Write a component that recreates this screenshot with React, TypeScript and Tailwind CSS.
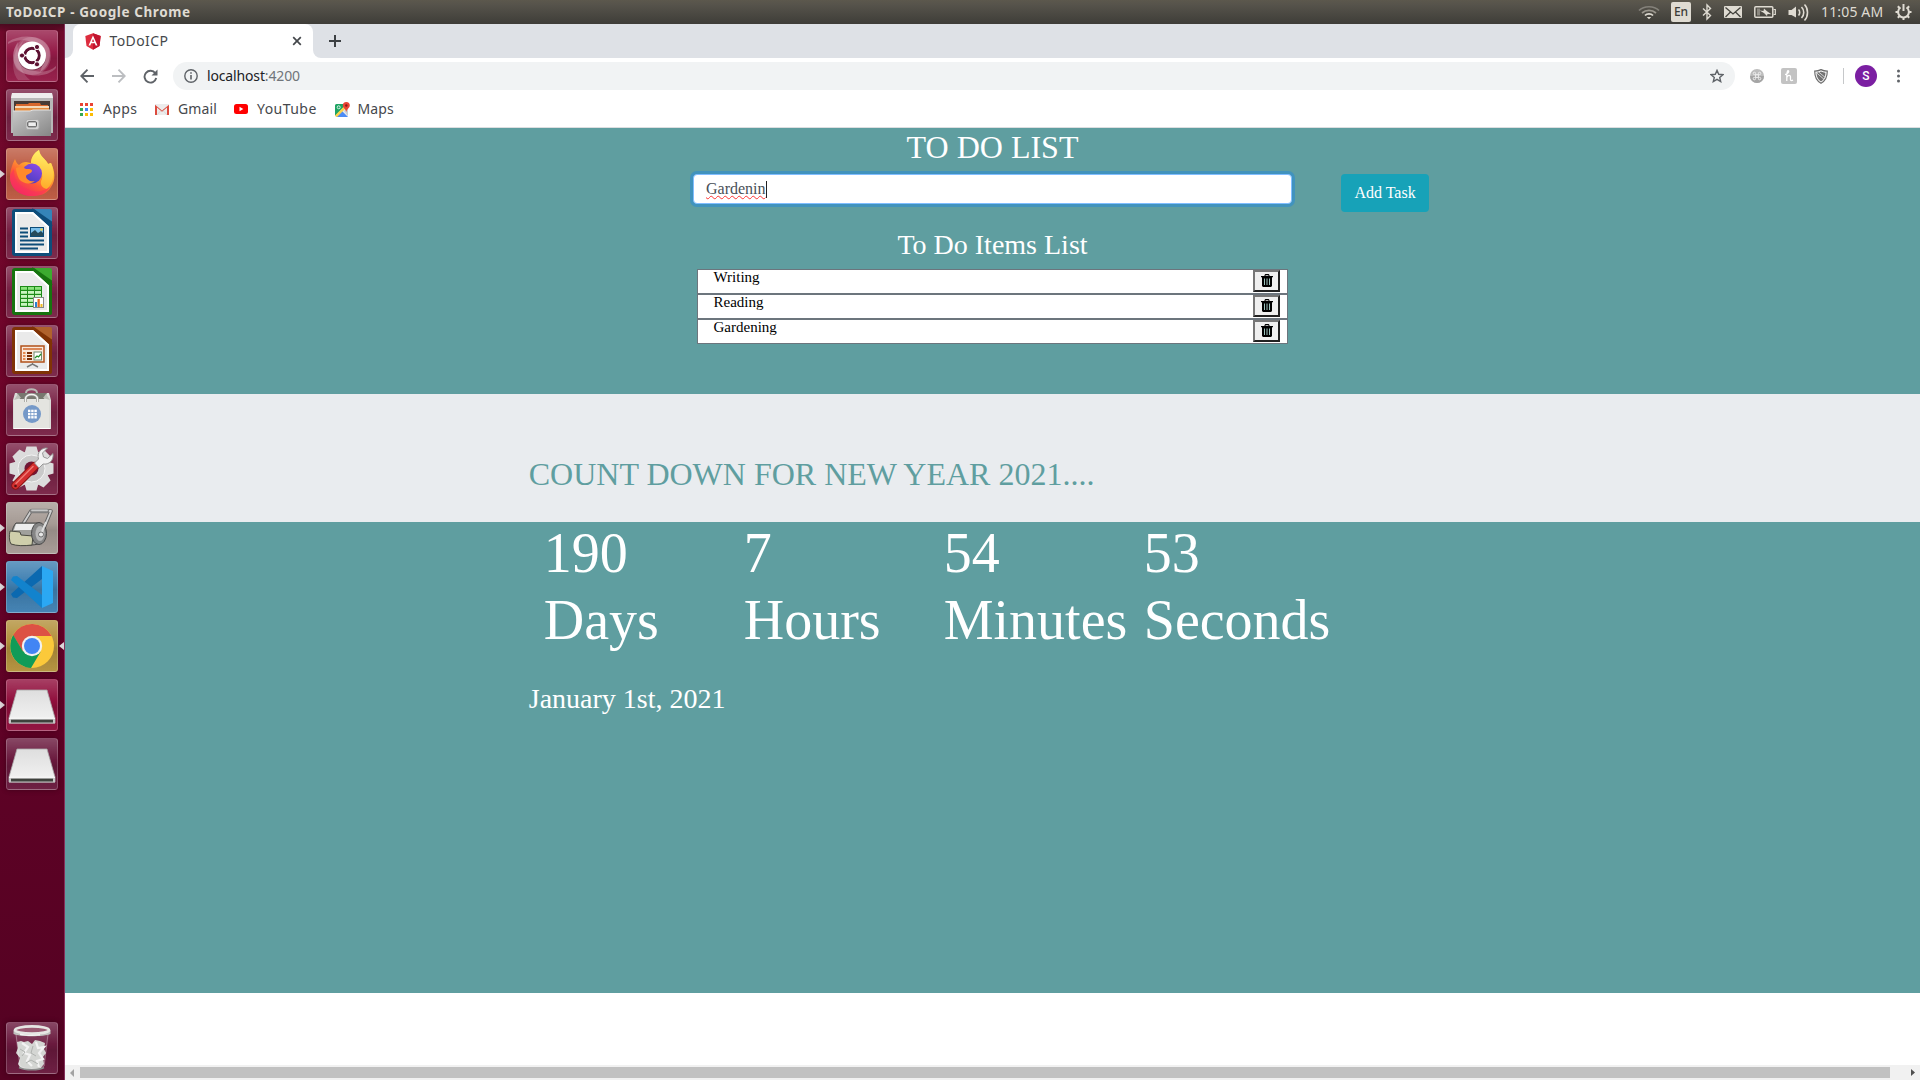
import React from "react";

const SERIF = "font-['Liberation_Serif',serif]";

/* ---------- launcher artwork, drawn on a 52x52 tile ---------- */

const UbuntuIcon = () => (
  <>
    <defs>
      <radialGradient id="ub" cx=".5" cy=".5" r=".7">
        <stop offset="0" stopColor="#fff" stopOpacity=".4" />
        <stop offset="1" stopColor="#fff" stopOpacity=".05" />
      </radialGradient>
    </defs>
    <circle cx="26" cy="26" r="19" fill="url(#ub)" />
    <path d="M2 12C14 4 36 4 43 18 46 28 42 38 34 42 40 30 38 16 26 12 18 9 8 10 2 14z" fill="#fff" opacity=".22" />
    <path d="M50 38C42 48 18 48 10 38 6 30 6 20 12 12 10 24 14 36 26 40 34 43 44 42 50 36z" fill="#fff" opacity=".22" />
    <path d="M12 50C4 40 6 20 18 10 10 22 12 40 24 50z" fill="#fff" opacity=".15" />
    <circle cx="26" cy="26.5" r="14" fill="#3a0016" opacity=".4" />
    <circle cx="26" cy="25.5" r="14" fill="#fff" />
    <circle cx="26" cy="25.5" r="7.2" fill="none" stroke="#5c1031" strokeWidth="3" />
    <path d="M26 25.5H15M26 25.5L31.5 16M26 25.5L31.5 35" stroke="#fff" strokeWidth="1.4" />
    <circle cx="26" cy="25.5" r="5.5" fill="#fff" />
    <g fill="#5c1031" stroke="#fff" strokeWidth="1">
      <circle cx="16" cy="25.5" r="2.6" />
      <circle cx="31" cy="17" r="2.6" />
      <circle cx="31" cy="34.3" r="2.6" />
    </g>
  </>
);

const FilesIcon = () => (
  <>
    <defs>
      <linearGradient id="fl" x1="0" y1="0" x2="1" y2="1">
        <stop offset="0" stopColor="#c9c9c9" />
        <stop offset="1" stopColor="#868686" />
      </linearGradient>
    </defs>
    <path d="M6 4h40l1 5v35H5V9z" fill="#b8b8b8" />
    <path d="M6 4h40l1 5H5z" fill="#eee" />
    <path d="M8 12h36v11H8z" fill="#463a35" />
    <path d="M10 15h12l1-1h11l1 2h7v7H9z" fill="#d8672c" />
    <path d="M9 17h34v2H9z" fill="#f5d9b8" />
    <path d="M9 19h34v4H9z" fill="#e58b3c" />
    <path d="M7 22h17l3-1h18v26H7z" fill="url(#fl)" />
    <path d="M7 22h17l3-1h18" fill="none" stroke="#e2e2e2" strokeWidth="1" />
    <rect x="20" y="30.5" width="13" height="10" rx="2" fill="#d4d4d4" stroke="#aaa" />
    <rect x="21.8" y="32.8" width="8.6" height="5" rx="1" fill="#eee" stroke="#444" strokeWidth="1" />
  </>
);

const FirefoxIcon = () => (
  <>
    <defs>
      <linearGradient id="ff" x1=".8" y1="0" x2=".2" y2="1">
        <stop offset="0" stopColor="#fff44f" />
        <stop offset=".35" stopColor="#ffb52d" />
        <stop offset=".65" stopColor="#ff5a36" />
        <stop offset="1" stopColor="#ec1b72" />
      </linearGradient>
      <linearGradient id="ffb" x1=".8" y1="0" x2=".3" y2="1">
        <stop offset="0" stopColor="#8a4be8" />
        <stop offset="1" stopColor="#4a3dc0" />
      </linearGradient>
      <linearGradient id="ffy" x1=".6" y1="0" x2=".5" y2="1">
        <stop offset="0" stopColor="#fff36a" />
        <stop offset="1" stopColor="#ffaa28" />
      </linearGradient>
    </defs>
    <path d="M9 11c1 3 2 5 4 6 2-2 4-3 7-3l5 1c0-5 3-10 8-13 1 7 7 9 9 14l3-1c4 8 5 17 0 24-4 7-11 9-19 9C13 48 4 40 4 29 4 22 7 15 9 11z" fill="url(#ff)" />
    <path d="M25 15c0-5 3-10 8-13 1 7 7 9 9 14l3-1c4 10 3 20-4 26-5-1-8-5-5-10 2-7-4-13-11-16z" fill="url(#ffy)" />
    <circle cx="26" cy="25.500" r="10" fill="url(#ffb)" />
    <path d="M10 20c4-2 7-1 10 1 3 0 6 0 6 2-1 3-5 3-6 5 0 4 5 6 9 5-4 4-12 3-16-2-2-4-3-8-3-11z" fill="#ff8a2c" />
    <path d="M4 27c-1 12 10 21 22 21 9 0 15-4 18-9-8 5-16 6-23 2C13 38 8 32 8 21z" fill="#f9325c" opacity=".55" />
  </>
);

function DocBase({ dark, light }: { dark: string; light: string }) {
  return (
    <>
      <path d="M9 2h25L46 14v33a2 2 0 0 1-2 2H9a3 3 0 0 1-3-3V5a3 3 0 0 1 3-3z" fill={dark} />
      <path d="M28 2h16a2 2 0 0 1 2 2v10.500z" fill={light} />
      <path d="M26 2L46 19" stroke={dark} strokeWidth="2" />
      <path d="M9 5h18L43 19.500V46H9z" fill="#eaeaea" />
      <path d="M10 6h16.600L42 20v25H10z" fill="none" stroke="#fff" strokeWidth="2" />
    </>
  );
}

const WriterIcon = () => (
  <>
    <DocBase dark="#0e4d7a" light="#3584b8" />
    <path d="M14 21.500h8M14 25.500h8M14 29.500h8M14 33.500h24M14 37.500h24M14 41.500h18" stroke="#0d4c78" strokeWidth="2" />
    <rect x="24.500" y="20.500" width="13" height="9" fill="#7cc0ea" stroke="#0d4c78" />
    <path d="M25 29v-3l4-3 3 3 3-2 2 2v3z" fill="#274a5a" />
    <circle cx="35.500" cy="22.500" r="1.200" fill="#f5d040" />
  </>
);

const CalcIcon = () => (
  <>
    <DocBase dark="#17740f" light="#3cab2f" />
    <rect x="14" y="20" width="22" height="21" fill="#1d8b17" />
    {[21, 25, 29, 33, 37].map((y) =>
      [15, 22, 29].map((x) => <rect key={`${x}-${y}`} x={x} y={y} width="6" height="2.800" fill={y === 21 ? "#8be37c" : "#c9f5bf"} />)
    )}
    <rect x="27.500" y="31.500" width="10" height="10" fill="#fff" stroke="#888" />
    <path d="M29 36h2v5h-2z" fill="#2a80d2" />
    <path d="M31.500 33h2.300v8h-2.300z" fill="#e8671c" />
    <path d="M34.500 38h2v3h-2z" fill="#f0b920" />
  </>
);

const ImpressIcon = () => (
  <>
    <DocBase dark="#803306" light="#b0622c" />
    <rect x="15" y="21" width="23" height="16" fill="#fae9dc" stroke="#b1501a" strokeWidth="1.500" />
    <path d="M17 24h19" stroke="#d0662c" strokeWidth="1.600" />
    <path d="M17 28h2.500M17 31h2.500M17 34h2.500" stroke="#e58a50" strokeWidth="2" />
    <path d="M21 28h5M21 31h5M21 34h5" stroke="#7a2f06" strokeWidth="2" />
    <rect x="28" y="27" width="7.500" height="8" fill="#fff" stroke="#6f8a70" />
    <path d="M29 33l2-2 1.500 1 2.500-3" fill="none" stroke="#25922a" strokeWidth="1.300" />
    <path d="M26.500 38v2M21 42l5.500-3 5.500 3" fill="none" stroke="#777" strokeWidth="1.500" />
  </>
);

const SoftwareIcon = () => (
  <>
    <path d="M20 12V9c0-5 11-5 11 0v3" fill="none" stroke="#b9b9b5" strokeWidth="2" />
    <path d="M9 9h34l2 7v29H7V16z" fill="#dadbd7" />
    <path d="M11 9h30l-3 6H14z" fill="#77776f" />
    <path d="M8 15h35v29H8z" fill="#e4e4e0" />
    <path d="M8 44.500h36" stroke="#fff" />
    <path d="M12 10l-4 6 7-2zM40 10l4 6-7-2z" fill="#bdbdb7" />
    <path d="M19.500 18v-3c0-6 12-6 12 0v3" fill="none" stroke="#92928c" strokeWidth="3" />
    <path d="M19.500 18v-3c0-6 12-6 12 0v3" fill="none" stroke="#f4f4f2" strokeWidth="1.600" />
    <circle cx="26" cy="30" r="9" fill="#7599c8" />
    {[26, 29.200, 32.400].map((y) => [22, 25.200, 28.400].map((x) => <rect key={`${x}-${y}`} x={x} y={y - 0.300} width="2.400" height="2.400" fill="#fff" />))}
  </>
);

const SettingsIcon = () => (
  <>
    <g fill="#dcdcdc">
      {[0, 45, 90, 135, 180, 225, 270, 315].map((a) => (
        <path key={a} d="M20.500 3.500h10l2 7h-14z" transform={`rotate(${a} 25.500 25.500)`} />
      ))}
      <circle cx="25.500" cy="25.500" r="17.500" />
    </g>
    <circle cx="25.500" cy="25.500" r="13.500" fill="#c9c9c9" stroke="#f3f3f3" />
    <circle cx="25.500" cy="25.500" r="7" fill="#6f1737" />
    <path d="M9.500 42.500L29 23" stroke="#8c1414" strokeWidth="8.500" strokeLinecap="round" />
    <path d="M9.500 42.500L29 23" stroke="#d32f2f" strokeWidth="6.500" strokeLinecap="round" />
    <path d="M10 40.500L27 23.500" stroke="#f07a72" strokeWidth="1.500" strokeLinecap="round" />
    <path d="M28.500 20l4-4c-2-6 3-12 9-11l-5 5 1 4 4 1.500 5.500-5c1 7-4 11.500-10 10.500L33 25z" fill="#f1f1f1" stroke="#8e8e8e" strokeWidth=".9" />
    <circle cx="9.500" cy="43" r="1.300" fill="#591010" />
  </>
);

const RollerIcon = () => (
  <>
    <path d="M17 22L25 9h20L36 31" fill="none" stroke="#626262" strokeWidth="3.600" strokeLinejoin="round" />
    <path d="M17 22L25 9h20L36 31" fill="none" stroke="#cfcfcf" strokeWidth="1.800" strokeLinejoin="round" />
    <path d="M26 9h15" stroke="#808080" strokeWidth="4.500" strokeLinecap="round" />
    <path d="M26 8.300h15" stroke="#c9c9c9" strokeWidth="1.800" strokeLinecap="round" />
    <path d="M10 21h24l2 20c-9 3-21 3-29 1-3-6-1-17 3-21z" fill="#a0a09c" stroke="#484848" />
    <path d="M10 22h22v6H8z" fill="#ededed" />
    <path d="M4 29l10 1 1 3 12 1-1 9c-8 1-15 1-21-1-2-3-2-9-1-13z" fill="#cfceab" stroke="#4a4a42" />
    <ellipse cx="33" cy="31.500" rx="7.500" ry="11" fill="#858585" stroke="#484848" />
    <ellipse cx="34" cy="31.500" rx="4.500" ry="7.500" fill="#b7b7b7" />
    <path d="M35 32l5-12" stroke="#ddd" strokeWidth="2" />
    <circle cx="35" cy="32.500" r="2.500" fill="#e8e8e8" stroke="#555" strokeWidth=".8" />
  </>
);

const CodeIcon = () => (
  <>
    <path d="M36 5L5 33l2 3.500 4 .5L36 18z" fill="#0b69b0" />
    <path d="M36 47L5 19l2-3.500 4-.5L36 34z" fill="#1283cd" />
    <path d="M36 5l11 5v32l-11 5z" fill="#2ba8f3" />
  </>
);

const ChromeIcon = () => (
  <>
    <circle cx="26" cy="26" r="22" fill="#fbc93a" />
    <path d="M7 14.900A22 22 0 0 1 45.600 16H26L16.700 31.300z" fill="#dd5144" />
    <path d="M7.200 15A22 22 0 0 0 25 48L34.500 32 26 26 17 31.500z" fill="#109b58" />
    <circle cx="26" cy="26" r="10.200" fill="#f1f1f1" />
    <circle cx="26" cy="26" r="8" fill="#4285f4" />
  </>
);

const DriveIcon = () => (
  <>
    <defs>
      <linearGradient id="dr" x1="0" y1="0" x2="0" y2="1">
        <stop offset="0" stopColor="#dedede" />
        <stop offset="1" stopColor="#f3f3f3" />
      </linearGradient>
    </defs>
    <path d="M11 11h30l8 28v5H3v-5z" fill="url(#dr)" stroke="#a8a8a8" strokeWidth=".8" />
    <path d="M3 39h46v5.500H3z" fill="#c6c6c6" />
    <path d="M3 39.300h46" stroke="#fff" />
    <rect x="5" y="40.700" width="42" height="2.800" fill="#3e413c" />
  </>
);

const TrashTileIcon = () => (
  <>
    <path d="M9 11l4 33c4 4 22 4 26 0l4-33z" fill="#fff" opacity=".08" />
    <path d="M11 20l4-1 3 1 4-1 4 3 3-4 5 1 5 2-1 6 2 4-3 4 1 7-4 5H15l-3-5 2-6-4-5 2-5z" fill="#d4d6d3" />
    <path d="M16 21l6 4-4 6 6 2-3 6 5 5M30 20l2 6 6-1-5 6 4 6-6 2 2 6" fill="none" stroke="#f2f2f2" strokeWidth="2.200" />
    <path d="M14 27l5 3-3 4M27 24l-2 7 5 3M20 41l5-3 7 4" fill="none" stroke="#b0b3b0" strokeWidth="1" />
    <path d="M10 12l4 32c5 4 19 4 24 0l4-32" fill="none" stroke="#fff" strokeOpacity=".3" />
    <path d="M13 45.500c6 3 20 3 25 0" fill="none" stroke="#8b8b8b" strokeWidth="1.500" />
    <path d="M7.500 8c5 4 32 4 37 0v4c-6 3-31 3-37 0z" fill="#bfc0bd" />
    <ellipse cx="26" cy="8" rx="17" ry="3.600" fill="#9a5a72" stroke="#e6e6e3" strokeWidth="2.600" />
    <path d="M14 11.500c6 1.500 14 1.600 20 .6v1.500c-6 .6-14 .6-20-.6z" fill="#f4f4f2" />
  </>
);

type Tile = { bg: string; art: React.ReactNode; running?: boolean; focused?: boolean; name: string };

const PLAIN = "bg-[#7a2447]";
const TILES: Tile[] = [
  { name: "Dash", bg: "bg-[#951c48]", art: <UbuntuIcon /> },
  { name: "Files", bg: PLAIN, art: <FilesIcon /> },
  { name: "Firefox", bg: "bg-[#bd5a41]", art: <FirefoxIcon />, running: true },
  { name: "Writer", bg: PLAIN, art: <WriterIcon /> },
  { name: "Calc", bg: PLAIN, art: <CalcIcon /> },
  { name: "Impress", bg: PLAIN, art: <ImpressIcon /> },
  { name: "Software", bg: PLAIN, art: <SoftwareIcon /> },
  { name: "Settings", bg: PLAIN, art: <SettingsIcon /> },
  { name: "Disk tool", bg: "bg-[#a69b95]", art: <RollerIcon />, running: true },
  { name: "Code", bg: "bg-[#4080b2]", art: <CodeIcon />, running: true },
  { name: "Chrome", bg: "bg-[#b3913c]", art: <ChromeIcon />, running: true, focused: true },
  { name: "Drive", bg: "bg-[#910f3d]", art: <DriveIcon />, running: true },
  { name: "Drive 2", bg: "bg-[#6a1a3e]", art: <DriveIcon /> },
];

function LauncherTile({ tile }: { tile: Tile }) {
  return (
    <div className="flex h-[52px] w-[64px] shrink-0 items-center">
      <svg className="h-[10px] w-[6px]" viewBox="0 0 6 10">{tile.running && <path d="M0 1l5 4-5 4z" fill="#dcd5d8" />}</svg>
      <div className={`h-[52px] w-[52px] overflow-hidden rounded-[3px] ${tile.bg} shadow-[0_0_5px_rgba(30,0,12,0.45)]`}>
        <div className="h-full w-full rounded-[3px] border border-white/20 bg-[linear-gradient(to_bottom,rgba(255,255,255,0.2),rgba(255,255,255,0)_42%,rgba(0,0,0,0.1)_55%,rgba(255,255,255,0.03))]">
          <svg className="-m-px h-[52px] w-[52px] max-w-none" viewBox="0 0 52 52" aria-label={tile.name}>{tile.art}</svg>
        </div>
      </div>
      <svg className="ml-px h-[10px] w-[5px]" viewBox="0 0 5 10">{tile.focused && <path d="M5 1L0 5l5 4z" fill="#dcd5d8" />}</svg>
    </div>
  );
}

function Launcher() {
  return (
    <aside className="flex w-[65px] shrink-0 flex-col border-r border-[#84305a] bg-[linear-gradient(to_bottom,#4a0a20_0,#710a2c_8px,#6f052a_30%,#5f0226_65%,#540222)] pt-[6px] pb-[6px]">
      <div className="flex flex-col gap-[7px]">
        {TILES.map((t) => (
          <LauncherTile key={t.name} tile={t} />
        ))}
      </div>
      <div className="mt-auto">
        <LauncherTile tile={{ name: "Trash", bg: "bg-[#6a1a3e]", art: <TrashTileIcon /> }} />
      </div>
    </aside>
  );
}

/* ---------- desktop panel ---------- */

function Panel() {
  return (
    <header className="flex h-6 shrink-0 items-center bg-[linear-gradient(to_bottom,#5c584d,#56534b_20%,#3e3d38)] pr-[8px] pl-[6px] font-['Noto_Sans',sans-serif] text-[#dfdbd2]">
      <span className="text-[13.5px] leading-6 font-bold tracking-[0.6px] whitespace-nowrap">ToDoICP - Google Chrome</span>
      <svg className="ml-auto h-6 w-[22px]" viewBox="0 0 22 24" fill="none" strokeWidth="1.700">
        <path d="M1 10.500C6 5.500 16 5.500 21 10.500" stroke="#84817a" />
        <path d="M4 13c4-3.600 10-3.600 14 0" stroke="#9b978e" />
        <path d="M7 15.500c2-2.300 6-2.300 8 0" stroke="#dfdbd2" />
        <path d="M8.800 17h4.400L11 19.200z" fill="#dfdbd2" />
      </svg>
      <span className="ml-[11px] flex h-5 w-5 items-center justify-center rounded-[2px] bg-[#dfdbd2] text-[12px] leading-none font-medium text-[#3c3b37]">En</span>
      <svg className="ml-[11px] h-6 w-[10px]" viewBox="0 0 10 24" fill="none" stroke="#dfdbd2" strokeWidth="1.400">
        <path d="M1 8.500l7.500 7L5 19V5l3.500 3.500L1 15.500" />
      </svg>
      <svg className="ml-[12px] h-6 w-[18px]" viewBox="0 0 18 24">
        <rect y="6" width="18" height="12" rx="1" fill="#dfdbd2" />
        <path d="M1.500 7.500L9 14l7.500-6.500M1.500 17L6.500 12M16.500 17L11.500 12" fill="none" stroke="#44433d" strokeWidth="1.300" />
      </svg>
      <svg className="ml-[12px] h-6 w-[22px]" viewBox="0 0 22 24">
        <rect x=".8" y="6.800" width="18" height="10.500" rx="1" fill="none" stroke="#dfdbd2" strokeWidth="1.500" />
        <path d="M3 8.500h3v7H3z" fill="#8b8880" />
        <path d="M19.500 9.500h1.800v5h-1.800" fill="none" stroke="#dfdbd2" strokeWidth="1.200" />
        <path d="M5.500 10.500l4 .5.500-2.500 3 2.800 4.500 3-4-.3-.5 2-3-3z" fill="#dfdbd2" />
      </svg>
      <svg className="ml-[12px] h-6 w-[21px]" viewBox="0 0 21 24" fill="none" stroke="#dfdbd2" strokeWidth="1.600">
        <path d="M.5 10h3L8 6.500v11L3.500 15h-3z" fill="#dfdbd2" stroke="none" />
        <path d="M10.500 9.500c1.600 1.600 1.600 4.400 0 6M13.500 7c3 3 3 8 0 11M16.500 4.500c4 4 4 12 0 16" />
      </svg>
      <span className="ml-[12px] w-[62px] text-[14px] leading-6 tracking-[0.15px] whitespace-nowrap">11:05 AM</span>
      <svg className="ml-[12px] h-6 w-[17px]" viewBox="0 0 17 24" fill="none" stroke="#dfdbd2">
        <path d="M5.500 7.500a5.400 5.400 0 1 0 6 0" strokeWidth="2" />
        <path d="M8.500 4v7" strokeWidth="2" />
        <path d="M8.500 17v3M.5 12h3M13.500 12h3M2.800 6.300l2 2M14.200 6.300l-2 2M2.800 17.700l2-2M14.200 17.700l-2-2" strokeWidth="2" />
      </svg>
    </header>
  );
}

/* ---------- browser chrome ---------- */

function TabStrip() {
  return (
    <div className="flex h-[34px] bg-[#dee1e6]">
      <div className="w-2 bg-white"><div className="h-full rounded-br-[8px] bg-[#dee1e6]" /></div>
      <div className="flex w-[240px] items-center rounded-t-[8px] bg-white pr-[11px] pl-[12px]">
        <svg className="h-[17px] w-4" viewBox="0 0 16 17">
          <path d="M8 .3L15.700 3l-1.200 10L8 16.700 1.500 13 .3 3z" fill="#dd2c3e" />
          <path d="M8 .3L15.700 3l-1.200 10L8 16.700z" fill="#c2152f" />
          <path d="M8 2.600L3.500 12.500h1.800l.9-2.200h3.600l.9 2.200h1.800zm0 3.300l1.200 2.900H6.800z" fill="#fff" />
        </svg>
        <span className="ml-[8.500px] font-['Noto_Sans',sans-serif] text-[14px] leading-none tracking-[0.4px] text-[#45484c]">ToDoICP</span>
        <svg className="ml-auto h-[10px] w-[10px]" viewBox="0 0 10 10"><path d="M1.200 1.200l7.600 7.600M8.800 1.200L1.200 8.800" stroke="#44474b" strokeWidth="1.700" /></svg>
      </div>
      <div className="w-2 bg-white"><div className="h-full rounded-bl-[8px] bg-[#dee1e6]" /></div>
      <svg className="mt-[11px] ml-2 h-3 w-3" viewBox="0 0 12 12"><path d="M6 0v12M0 6h12" stroke="#3c4043" strokeWidth="2" /></svg>
    </div>
  );
}

function Toolbar() {
  return (
    <div className="flex h-9 items-center bg-white pl-[15px]">
      <svg className="h-[14px] w-[14px]" viewBox="0 0 14 14" fill="none" stroke="#5f6368" strokeWidth="1.900"><path d="M14 7H1.500M7.500.7L1.300 7l6.200 6.300" /></svg>
      <svg className="ml-[18px] h-[14px] w-[14px]" viewBox="0 0 14 14" fill="none" stroke="#bcbec1" strokeWidth="1.900"><path d="M0 7h12.500M6.500.7L12.700 7l-6.200 6.300" /></svg>
      <svg className="ml-[17px] h-[15px] w-[15px]" viewBox="0 0 15 15"><path d="M12.300 4.300A5.900 5.900 0 1 0 13.200 9" fill="none" stroke="#5f6368" strokeWidth="1.900" /><path d="M14.500.5v6h-6z" fill="#5f6368" /></svg>
      <div className="ml-[15px] flex h-7 w-[1562px] items-center rounded-full bg-[#f1f3f4] pr-[11px] pl-[11px]">
        <svg className="h-[14px] w-[14px]" viewBox="0 0 14 14"><circle cx="7" cy="7" r="6.200" fill="none" stroke="#5f6368" strokeWidth="1.400" /><path d="M7 6v4.500M7 3.300v1.500" stroke="#5f6368" strokeWidth="1.600" /></svg>
        <span className="ml-[9px] font-['Noto_Sans',sans-serif] text-[14px] leading-none tracking-[-0.150px] text-[#202124]">localhost<span className="text-[#70757a]">:4200</span></span>
        <svg className="ml-auto h-[14px] w-[14px]" viewBox="0 0 14 14"><path d="M7 1.400l1.700 3.900 4.200.4-3.200 2.800 1 4.100L7 10.400l-3.700 2.200 1-4.100L1.100 5.700l4.200-.4z" fill="none" stroke="#5f6368" strokeWidth="1.400" /></svg>
      </div>
      <svg className="ml-[15px] h-[14px] w-[14px]" viewBox="0 0 14 14">
        <circle cx="7" cy="7" r="7" fill="#bdbdbd" /><path d="M0 7h14a7 7 0 0 1-14 0z" fill="#a5a5a5" />
        <path d="M5.600 5.600h2.800v2.800H5.600zM5.600 5.600H4.500a1.200 1.200 0 1 1 1.100-1.100zM8.400 5.600V4.500a1.200 1.200 0 1 1 1.100 1.100zM8.400 8.400h1.100a1.200 1.200 0 1 1-1.100 1.100zM5.600 8.400v1.100a1.200 1.200 0 1 1-1.100-1.100z" fill="none" stroke="#eee" strokeWidth="1" />
      </svg>
      <svg className="ml-[17px] h-4 w-4" viewBox="0 0 16 16">
        <rect width="16" height="16" rx="2" fill="#c3c3c3" />
        <path d="M4 6.500C6.500 6 8.300 4 7.600 2.800 6.800 1.800 5.800 4 5.800 7v6M5.800 9.500c.8-2.500 3.700-3 3.700-.5 0 2-.8 4.500 2.500 3.200" fill="none" stroke="#fff" strokeWidth="1.300" />
      </svg>
      <svg className="ml-[17px] h-[15px] w-[14px]" viewBox="0 0 14 15">
        <path d="M7 .6c2 1.100 4 1.500 6.300 1.500 0 5.900-1.800 9.900-6.300 12.200C2.500 12 .7 8 .7 2.100 3 2.100 5 1.700 7 .6z" fill="#fff" stroke="#6e6e6e" strokeWidth="1.200" />
        <path d="M7 2.600c1.500.8 3 1.100 4.500 1.200-.2 4.200-1.500 6.900-4.500 8.600C4 10.700 2.700 8 2.500 3.800 4 3.700 5.500 3.400 7 2.600z" fill="#717171" />
        <path d="M2.500 3.800l7.500 6.500M5 3.300l6.300 5.200" stroke="#ddd" strokeWidth=".9" />
      </svg>
      <span className="ml-[15px] h-4 w-px bg-[#c6c8ca]" />
      <span className="ml-[11px] flex h-[22px] w-[22px] items-center justify-center rounded-full bg-[#7b1fa2] font-[Roboto,sans-serif] text-[12px] leading-none font-medium text-white">S</span>
      <svg className="ml-5 h-[14px] w-[3px]" viewBox="0 0 3 14" fill="#5f6368"><circle cx="1.500" cy="2" r="1.500" /><circle cx="1.500" cy="7" r="1.500" /><circle cx="1.500" cy="12" r="1.500" /></svg>
    </div>
  );
}

const GRID_COLORS = ["#ea4335", "#ea4335", "#ea4335", "#34a853", "#4285f4", "#fbbc05", "#34a853", "#fbbc05", "#fbbc05"];

function Bookmarks() {
  return (
    <nav className="flex h-[34px] items-center border-b border-[#dcdee0] bg-white pb-[3px] pl-[15px] font-['Noto_Sans',sans-serif] text-[14px] leading-none text-[#45484c]">
      <svg className="h-[13px] w-[13px]" viewBox="0 0 13 13">
        {GRID_COLORS.map((c, i) => <rect key={i} x={(i % 3) * 5} y={Math.floor(i / 3) * 5} width="3" height="3" fill={c} />)}
      </svg>
      <span className="ml-[10px] w-[35px] tracking-[0.4px] whitespace-nowrap">Apps</span>
      <svg className="ml-[17px] h-[11px] w-[14px]" viewBox="0 0 14 11">
        <path d="M0 0h14v11H0z" fill="#ececec" /><path d="M0 11V.8L7 6.500 14 .8V11h-2V3.600L7 7.800 2 3.600V11z" fill="#dc4a3d" />
        <path d="M2 11l4-4.500M12 11L8 6.500" stroke="#d0d0d0" strokeWidth=".7" />
      </svg>
      <span className="ml-[9px] w-[39px] tracking-[0.1px] whitespace-nowrap">Gmail</span>
      <svg className="ml-[17px] h-[10px] w-[14px]" viewBox="0 0 14 10"><rect width="14" height="10" rx="2.500" fill="#f00" /><path d="M5.500 2.800v4.400L9.300 5z" fill="#fff" /></svg>
      <span className="ml-[9px] w-[61px] tracking-[0.45px] whitespace-nowrap">YouTube</span>
      <svg className="ml-[17px] h-[15px] w-[15px]" viewBox="0 0 15 15">
        <rect y="2" width="13" height="13" rx="1.500" fill="#e8eaed" />
        <path d="M1.500 2H9v3L0 14V3.500A1.500 1.500 0 0 1 1.500 2z" fill="#1fa463" />
        <path d="M1 15l6-6 6 6z" fill="#4c8bf5" /><path d="M0 13.500L9.500 4l1.500 2L2 15H1.500z" fill="#fdd34a" /><path d="M9 9l4-3v8z" fill="#c9ced3" />
        <circle cx="3.700" cy="5.300" r="1.500" fill="none" stroke="#fff" strokeWidth=".8" />
        <path d="M11.300 0a3.500 3.500 0 0 1 3.500 3.500c0 2.500-3 3.500-3.500 6.500-.5-3-3.500-4-3.500-6.500A3.500 3.500 0 0 1 11.300 0z" fill="#e94435" /><circle cx="11.300" cy="3.500" r="1.200" fill="#8c1a12" />
      </svg>
      <span className="ml-[7.500px] tracking-[0.150px] whitespace-nowrap">Maps</span>
    </nav>
  );
}

/* ---------- to-do page ---------- */

function DeleteButton() {
  return (
    <button className="mr-[7px] flex h-[22px] w-[27px] items-center justify-center border-2 border-t-[#767676] border-r-[#212121] border-b-[#212121] border-l-[#767676] bg-[#efefef]" aria-label="Delete">
      <svg className="h-[13px] w-3" viewBox="0 0 12 13">
        <path d="M3.500 2V.9L4.400 0h3.200l.9.900V2H12v1.300h-1V12l-1 1H2l-1-1V3.300H0V2zM4.600 2h2.800V1.200H4.600z" fill="#000" fillRule="evenodd" />
        <path d="M3.500 4.500v6.500M6 4.500v6.500M8.500 4.500v6.500" stroke="#9cc3bd" strokeWidth="1" />
      </svg>
    </button>
  );
}

const TASKS = ["Writing", "Reading", "Gardening"];
const COUNTDOWN = [["190", "Days"], ["7", "Hours"], ["54", "Minutes"], ["53", "Seconds"]];

function TodoPage() {
  return (
    <main className={`flex flex-1 flex-col overflow-hidden bg-white ${SERIF}`}>
      <section className="h-[266px] shrink-0 bg-[#5f9ea0]">
        <h2 className="text-center text-[32px] leading-[38.4px] text-white">TO DO LIST</h2>
        <div className="mt-[7.600px] flex items-start pl-[628px]">
          <div className="flex h-[30px] w-[599px] items-center rounded-[4px] border border-[#80bdff] bg-white pl-3 text-[16px] text-[#495057] shadow-[0_0_0_3px_rgba(0,123,255,0.25),0_0_0_3px_rgba(0,123,255,0.08)]">
            <span className="underline decoration-[#f33] decoration-wavy decoration-[1px] underline-offset-[1px]">Gardenin</span>
            <span className="h-[17px] w-px bg-[#222]" />
          </div>
          <button className="ml-[49px] h-[38px] w-[88px] rounded-[4px] bg-[#17a2b8] text-[16px] leading-[36px] text-white">Add Task</button>
        </div>
        <h3 className="mt-[16px] text-center text-[28px] leading-[33.6px] text-white">To Do Items List</h3>
        <ul className="mt-[7px] ml-[632px] w-[591px]">
          {TASKS.map((t) => (
            <li key={t} className="flex h-[25px] justify-between border border-[#6c757d] bg-white pl-[15.5px] text-[15px] leading-[15px] text-black">
              <span>{t}</span>
              <DeleteButton />
            </li>
          ))}
        </ul>
      </section>
      <section className="h-32 shrink-0 bg-[#e9ecef] pt-[61px] pl-[463.75px]">
        <h2 className="text-[32px] leading-[38.400px] text-[#5f9ea0]">COUNT DOWN FOR NEW YEAR 2021....</h2>
      </section>
      <section className="h-[471px] shrink-0 bg-[#5f9ea0] pl-[463.75px] text-white">
        <div className="-mt-[2px] flex pl-[15px] text-[56px] leading-[67.200px]">
          {COUNTDOWN.map(([n, unit]) => (
            <div key={unit} className="w-[200px]">
              <div>{n}</div>
              <div>{unit}</div>
            </div>
          ))}
        </div>
        <h3 className="mt-[28px] text-[28px] leading-[33.600px]">January 1st, 2021</h3>
      </section>
    </main>
  );
}

function ScrollBar() {
  return (
    <div className="flex h-[15px] shrink-0 items-center bg-[#f1f1f1]">
      <svg className="h-[15px] w-[15px]" viewBox="0 0 15 15"><path d="M9 4v8L5 8z" fill="#a3a3a3" /></svg>
      <div className="h-[11px] w-[1810px] bg-[#c1c1c1]" />
      <svg className="ml-auto h-[15px] w-[15px]" viewBox="0 0 15 15"><path d="M6 4v7l4-3.500z" fill="#505050" /></svg>
    </div>
  );
}

export default function App() {
  return (
    <div className="flex h-[1080px] w-[1920px] flex-col overflow-hidden">
      <Panel />
      <div className="flex min-h-0 flex-1">
        <Launcher />
        <div className="flex min-w-0 flex-1 flex-col">
          <TabStrip />
          <Toolbar />
          <Bookmarks />
          <TodoPage />
          <ScrollBar />
        </div>
      </div>
    </div>
  );
}
